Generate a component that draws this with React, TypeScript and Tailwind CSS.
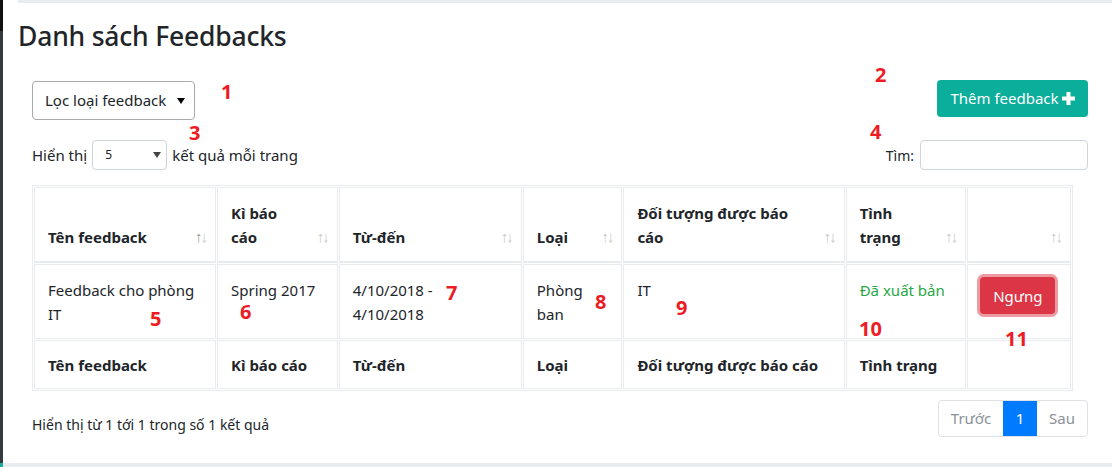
import * as React from "react"

const cols = [
  { key: "name", label: "Tên feedback", w: "w-[181px]", active: true },
  { key: "period", label: "Kì báo cáo", w: "w-[120px]" },
  { key: "range", label: "Từ-đến", w: "w-[182px]" },
  { key: "type", label: "Loại", w: "w-[99px]" },
  { key: "target", label: "Đối tượng được báo cáo", w: "w-[220px]" },
  { key: "status", label: "Tình trạng", w: "w-[120px]" },
  { key: "action", label: "", w: "w-[103px]" },
]

const marks = [
  { n: "1", cls: "left-[221px] top-[80px]" },
  { n: "2", cls: "left-[875px] top-[63px]" },
  { n: "3", cls: "left-[189px] top-[121px]" },
  { n: "4", cls: "left-[870px] top-[120px]" },
  { n: "5", cls: "left-[150px] top-[307px]" },
  { n: "6", cls: "left-[240px] top-[300px]" },
  { n: "7", cls: "left-[446px] top-[281px]" },
  { n: "8", cls: "left-[595px] top-[290px]" },
  { n: "9", cls: "left-[676px] top-[296px]" },
  { n: "10", cls: "left-[859px] top-[317px]" },
  { n: "11", cls: "left-[1005px] top-[327px]" },
]

export default function App() {
  return (
    <div className="relative flex h-[467px] w-[1112px] overflow-hidden bg-white font-['Noto_Sans',sans-serif] text-[#212529]">
      {/* sidebar edge */}
      <div className="flex w-[3px] shrink-0 flex-col">
        <div className="h-[31px] bg-[#111]" />
        <div className="flex-1 bg-[#343a40]" />
        <div className="h-[4px] bg-[#1aae9c]" />
      </div>

      <div className="flex flex-1 flex-col">
        <div className="ml-[15px] h-[3px] bg-[#e9ecef]" />

        <h2 className="ml-[15px] mt-[17px] text-[26.5px] font-medium leading-[32px] tracking-[-0.2px]">Danh sách Feedbacks</h2>

        <div className="ml-[29px] mr-[24px] flex flex-1 flex-col">
          {/* filter + add */}
          <div className="mt-[28px] flex items-start justify-between">
            <div className="mt-[1px] flex h-[39px] w-[163px] items-center justify-between rounded-[4px] border border-[#a9a9a9] pl-[12px] pr-[9px] text-[15px]">
              <span>Lọc loại feedback</span>
              <TriangleDown className="text-black" />
            </div>
            <button className="flex h-[37px] w-[151px] items-center justify-center gap-[3px] rounded-[4px] bg-[#0bad9b] text-[15px] text-white">
              Thêm feedback
              <PlusIcon />
            </button>
          </div>

          {/* length + search */}
          <div className="mt-[20px] flex items-center justify-between text-[15px]">
            <div className="flex items-center gap-[5px]">
              <span>Hiển thị</span>
              <div className="flex h-[30px] w-[75px] items-center justify-between rounded-[4px] border border-[#ced4da] pl-[12px] pr-[5px] text-[12px]">
                <span>5</span>
                <TriangleDown className="text-[#444]" />
              </div>
              <span>kết quả mỗi trang</span>
            </div>
            <div className="flex items-center gap-[6px]">
              <span className="text-[14px]">Tìm:</span>
              <div className="h-[30px] w-[168px] rounded-[4px] border border-[#ced4da]" />
            </div>
          </div>

          {/* table */}
          <table className="mt-[15px] w-[1041px] table-fixed border-separate border-spacing-px border border-[#e9ecef] text-[15px] leading-[24px]">
            <colgroup>
              {cols.map((c) => (
                <col key={c.key} className={c.w} />
              ))}
            </colgroup>
            <thead>
              <tr>
                {cols.map((c) => (
                  <th
                    key={c.key}
                    className="relative border border-b-2 border-[#e9ecef] pb-[12px] pl-[13px] pr-[30px] pt-[13px] text-left align-bottom font-bold"
                  >
                    {c.label}
                    <span className="absolute bottom-[15px] right-[9px] text-[15px] leading-[20px] tracking-[-2px]">
                      <span className={c.active ? "text-[#9a9a9a]" : "text-[#c8c8c8]"}>↑</span>
                      <span className="text-[#c8c8c8]">↓</span>
                    </span>
                  </th>
                ))}
              </tr>
            </thead>
            <tbody>
              <tr className="align-top">
                <td className="h-[75px] border border-[#e9ecef] px-[13px] pt-[13px]">Feedback cho phòng IT</td>
                <td className="border border-[#e9ecef] px-[13px] pt-[13px]">Spring 2017</td>
                <td className="border border-[#e9ecef] px-[13px] pt-[13px] pr-[40px]">4/10/2018 - 4/10/2018</td>
                <td className="border border-[#e9ecef] px-[13px] pt-[13px] pr-[30px]">Phòng ban</td>
                <td className="border border-[#e9ecef] px-[13px] pt-[13px]">IT</td>
                <td className="border border-[#e9ecef] px-[13px] pt-[13px] text-[#28a745]">Đã xuất bản</td>
                <td className="border border-[#e9ecef] px-[12px] pt-[12px]">
                  <button className="h-[37px] w-[75px] rounded-[4px] bg-[#dc3545] text-[15px] text-white shadow-[0_0_0_3px_rgba(220,53,69,0.5)]">
                    Ngưng
                  </button>
                </td>
              </tr>
            </tbody>
            <tfoot>
              <tr>
                {cols.map((c) => (
                  <th key={c.key} className="h-[49px] border border-[#e9ecef] px-[13px] py-[11px] text-left font-bold">
                    {c.label}
                  </th>
                ))}
              </tr>
            </tfoot>
          </table>

          {/* info + pagination */}
          <div className="mt-[9px] flex items-center justify-between text-[14px]">
            <span className="mt-[11px]">Hiển thị từ 1 tới 1 trong số 1 kết quả</span>
            <div className="flex h-[37px] overflow-hidden rounded-[4px] border border-[#dee2e6] text-[15px]">
              <span className="flex w-[64px] items-center justify-center text-[#8a9198]">Trước</span>
              <span className="flex w-[34px] items-center justify-center bg-[#007bff] text-white">1</span>
              <span className="flex w-[50px] items-center justify-center text-[#8a9198]">Sau</span>
            </div>
          </div>
        </div>

        <div className="h-[4px] bg-[#e9ecef]" />
      </div>

      {/* red annotation numbers over the screenshot */}
      {marks.map((m) => (
        <span
          key={m.n}
          className={`absolute ${m.cls} font-['Noto_Sans',sans-serif] text-[20px] font-bold leading-[24px] text-[#ed1c24]`}
        >
          {m.n}
        </span>
      ))}
    </div>
  )
}

function TriangleDown({ className }: { className?: string }) {
  return (
    <svg width="8" height="6" viewBox="0 0 8 6" className={className}>
      <path d="M0 0h8L4 6z" fill="currentColor" />
    </svg>
  )
}

function PlusIcon() {
  return (
    <svg width="13" height="13" viewBox="0 0 13 13">
      <path d="M4.5 0h4v4.5H13v4H8.5V13h-4V8.5H0v-4h4.5z" fill="white" />
    </svg>
  )
}
